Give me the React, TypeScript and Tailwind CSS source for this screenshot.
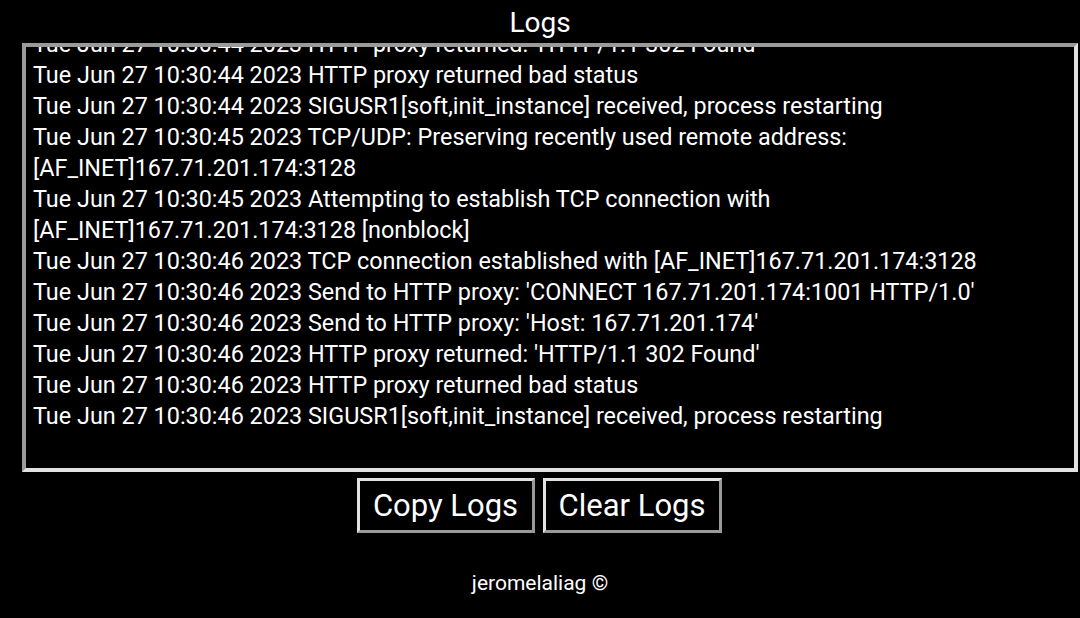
import React from 'react';

const LOGS = [
  "Tue Jun 27 10:30:44 2023 HTTP proxy returned: 'HTTP/1.1 302 Found'",
  "Tue Jun 27 10:30:44 2023 HTTP proxy returned bad status",
  "Tue Jun 27 10:30:44 2023 SIGUSR1[soft,init_instance] received, process restarting",
  "Tue Jun 27 10:30:45 2023 TCP/UDP: Preserving recently used remote address: [AF_INET]167.71.201.174:3128",
  "Tue Jun 27 10:30:45 2023 Attempting to establish TCP connection with [AF_INET]167.71.201.174:3128 [nonblock]",
  "Tue Jun 27 10:30:46 2023 TCP connection established with [AF_INET]167.71.201.174:3128",
  "Tue Jun 27 10:30:46 2023 Send to HTTP proxy: 'CONNECT 167.71.201.174:1001 HTTP/1.0'",
  "Tue Jun 27 10:30:46 2023 Send to HTTP proxy: 'Host: 167.71.201.174'",
  "Tue Jun 27 10:30:46 2023 HTTP proxy returned: 'HTTP/1.1 302 Found'",
  "Tue Jun 27 10:30:46 2023 HTTP proxy returned bad status",
  "Tue Jun 27 10:30:46 2023 SIGUSR1[soft,init_instance] received, process restarting",
];

export default function App() {
  return (
    <div className="w-[1080px] h-[618px] bg-black text-white flex flex-col font-['Roboto',sans-serif] overflow-hidden">
      <h1 className="h-[43px] flex items-center justify-center text-[28px] leading-none pt-[2px]">Logs</h1>

      {/* log box, inset border */}
      <div className="ml-[22px] mr-[2px] h-[429px] border-4 border-t-[#9a9a9a] border-l-[#9a9a9a] border-b-[#e2e2e2] border-r-[#e2e2e2] overflow-hidden flex flex-col justify-end pl-[7px] pr-[30px] pb-[36px]">
        {LOGS.map((line, i) => (
          <div key={i} className="text-[23.4px] leading-[31px] whitespace-pre-wrap">{line}</div>
        ))}
      </div>

      <div className="flex justify-center gap-[8px] mt-[6px] pr-[2px]">
        <button className="w-[178px] h-[55px] border-[3px] border-t-[#e2e2e2] border-l-[#e2e2e2] border-b-[#9a9a9a] border-r-[#9a9a9a] bg-black text-white text-[31px] leading-none">Copy Logs</button>
        <button className="w-[179px] h-[55px] border-[3px] border-t-[#e2e2e2] border-l-[#e2e2e2] border-b-[#9a9a9a] border-r-[#9a9a9a] bg-black text-white text-[31px] leading-none">Clear Logs</button>
      </div>

      <footer className="mt-[40px] text-center text-[21px] leading-none">jeromelaliag ©</footer>
    </div>
  );
}
